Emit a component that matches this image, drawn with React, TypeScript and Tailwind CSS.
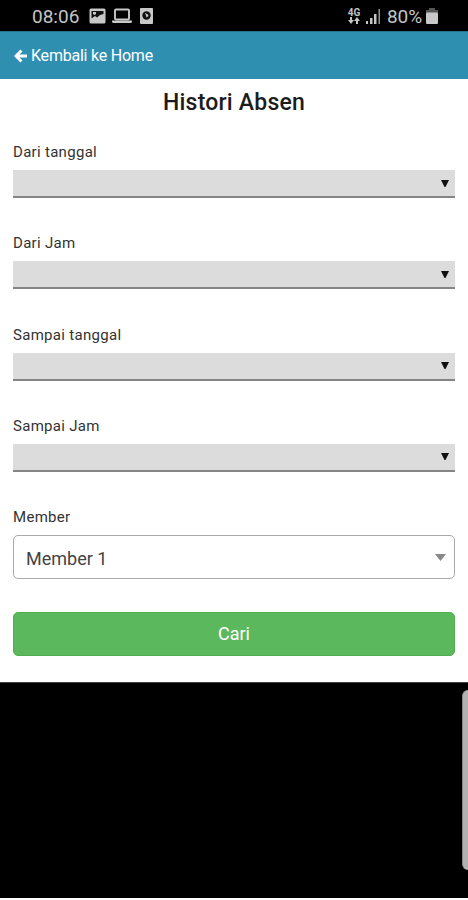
import { useState } from "react";

const DATE_FIELDS = ["Dari tanggal", "Dari Jam", "Sampai tanggal", "Sampai Jam"];

function StatusBar() {
  return (
    <div className="flex h-[31px] items-center bg-black pl-[32px] pr-[30px] text-[#c4c4c4]">
      <span className="w-[57px] whitespace-nowrap pt-[2px] text-[19px] leading-none">08:06</span>

      {/* Notification icons */}
      <svg width="17" height="16" viewBox="0 0 17 16" className="mt-px">
        <rect x="0.5" y="0.5" width="16" height="15" rx="1.5" fill="#c8c8c8" />
        <path d="M2.500 3h12v3l-3.500 1-3 2.500-2-1.500-3.500 2.500z" fill="#111" />
        <path d="M4 4h3v2l-1.500 1L4 6z" fill="#c8c8c8" />
      </svg>
      <svg width="20" height="16" viewBox="0 0 20 16" className="ml-[6px] mt-px">
        <rect x="3" y="1.500" width="14" height="10" rx="1" fill="none" stroke="#c8c8c8" strokeWidth="1.900" />
        <path d="M0 12.500h20v1.500l-1 1H1l-1-1z" fill="#c8c8c8" />
      </svg>
      <svg width="13" height="16" viewBox="0 0 13 16" className="ml-[8px] mt-px">
        <rect width="13" height="16" rx="1" fill="#c8c8c8" />
        <circle cx="6.500" cy="7.500" r="4.200" fill="#111" />
        <path d="M5 5l3 1.500.5 1.500-2 1.500-.5-2z" fill="#c8c8c8" />
      </svg>

      <div className="ml-auto flex items-center">
        <div className="flex w-[14px] flex-col items-center">
          <span className="text-[10px] font-bold leading-[9px]">4G</span>
          <svg width="12" height="7" viewBox="0 0 12 7" fill="currentColor">
            <path d="M2 0h2v3h2L3 7 0 3h2zM8 7h2V4h2L9 0 6 4h2z" />
          </svg>
        </div>
        <svg width="15" height="15" viewBox="0 0 15 15" className="ml-[5px] mt-px" fill="currentColor">
          <rect x="0" y="12" width="2" height="3" />
          <rect x="4" y="9" width="2.500" height="6" />
          <rect x="8" y="5" width="2.500" height="10" />
          <rect x="12.500" y="0" width="1.500" height="15" opacity="0.75" />
        </svg>
        <span className="ml-[6px] w-[36px] whitespace-nowrap pt-[2px] text-[19px] leading-none tracking-[-0.1px]">80%</span>
        <svg width="12" height="16" viewBox="0 0 12 16" className="ml-[3px]">
          <path d="M3 0h6v2h3v3H0V2h3z" fill="#555" />
          <rect y="4.500" width="12" height="11.500" rx="1" fill="#c8c8c8" />
        </svg>
      </div>
    </div>
  );
}

function PickerField({ label }: { label: string }) {
  return (
    <div className="h-[91.300px]">
      <label className="block h-7 text-[15px] leading-5 tracking-[0.3px] text-[#333]">{label}</label>
      <button
        type="button"
        aria-label={label}
        className="flex h-[28px] w-full items-center justify-end border-b-2 border-[#858585] bg-[#dcdcdc] pr-[6px]"
      >
        <svg width="8" height="7" viewBox="0 0 8 7">
          <path d="M0 0h8L4.500 7h-1z" fill="#111" />
        </svg>
      </button>
    </div>
  );
}

export default function App() {
  const [member] = useState("Member 1");

  return (
    <div className="h-[900px] w-full overflow-hidden bg-white font-['Roboto',sans-serif] text-[#111]">
      <StatusBar />

      <header className="flex h-[48px] items-center border-t border-[#28748f] bg-[#2e8fb1] pl-[14px] text-white">
        <svg width="13" height="14" viewBox="0 0 13 14" fill="none" stroke="currentColor" strokeWidth="3">
          <path d="M7.500 1.500L2 7l5.500 5.500M2.500 7H13" />
        </svg>
        <span className="ml-1 text-[16px] tracking-[-0.22px]">Kembali ke Home</span>
      </header>

      <main className="h-[603px] px-[13px] pt-[10px]">
        <h1 className="h-[53px] text-center text-[23px] font-medium leading-[28px] tracking-[0.2px] text-[#1c1c1c]">
          Histori Absen
        </h1>

        {DATE_FIELDS.map((label) => (
          <PickerField key={label} label={label} />
        ))}

        <label className="block h-7 text-[15px] leading-5 tracking-[0.3px] text-[#333]">Member</label>
        <button
          type="button"
          className="flex h-[44px] w-full items-center justify-between rounded-[5px] border border-[#aaa] bg-white pl-[12px] pr-[8px] text-[18px] text-[#444]"
        >
          <span className="pt-[2px]">{member}</span>
          <svg width="11" height="7" viewBox="0 0 11 7">
            <path d="M0 0h11L5.500 7z" fill="#888" />
          </svg>
        </button>

        <button
          type="submit"
          className="mt-[33px] h-[44px] w-full rounded-[5px] border border-[#4fae50] bg-[#5cb85c] pb-[2px] text-[18px] text-white"
        >
          Cari
        </button>
      </main>

      {/* Empty area under the form, with the edge panel handle */}
      <div className="flex h-[216px] justify-end border-t border-[#444] bg-black pt-[7px]">
        <div className="h-[180px] w-[6px] rounded-l-[6px] border-l border-[#888] bg-[#b2b2b2]" />
      </div>
    </div>
  );
}
